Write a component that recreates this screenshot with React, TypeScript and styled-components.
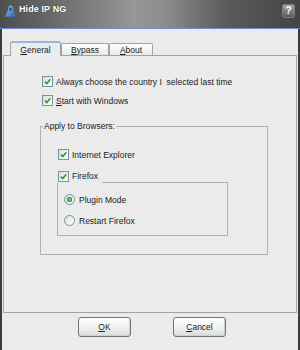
import React from 'react';
import styled, { createGlobalStyle } from 'styled-components';

const GlobalStyle = createGlobalStyle`
	html, body {
		margin: 0;
		padding: 0;
		background: #3c3c3c;
	}
	body {
		font-family: 'Liberation Sans', Arial, sans-serif;
		font-size: 8.5px;
		color: #1b1b1b;
	}
`;

const CheckBox = ({ checked }: { checked?: boolean }) => (
	<Box>
		{checked && (
			<svg width='7' height='7' viewBox='0 0 7 7'>
				<path d='M0.8 3.6 L2.8 5.6 L6.3 1.2' fill='none' stroke='#22a322' strokeWidth='1.6' />
			</svg>
		)}
	</Box>
);

const Radio = ({ checked }: { checked?: boolean }) => <RadioDot checked={checked} />;

const AppIcon = () => (
	<svg width='13' height='12' viewBox='0 0 13 12'>
		<defs>
			<linearGradient id='hood' x1='0' y1='0' x2='1' y2='1'>
				<stop offset='0' stopColor='#8cc2ee' />
				<stop offset='1' stopColor='#2a63a8' />
			</linearGradient>
		</defs>
		<path d='M6.5 0.3 C4.6 0.3 4 2.6 4.2 4.6 L1 11.8 H12.2 L9.2 5.2 C9.6 2.8 8.6 0.3 6.5 0.3 Z' fill='url(#hood)' />
		<path d='M5.6 3.2 C5.6 2.4 7.2 2.4 7.4 3.4 L7.2 6 L5.8 6 Z' fill='#1d3f6e' />
	</svg>
);

const App = () => {
	return (
		<>
			<GlobalStyle />
			<Window>
				<TitleBar>
					<AppIcon />
					<Title>Hide IP NG</Title>
					<HelpButton>?</HelpButton>
				</TitleBar>
				<Body>
					<Tabs>
						<Tab active width={51}>
							<u>G</u>eneral
						</Tab>
						<Tab width={48}>
							<u>B</u>ypass
						</Tab>
						<Tab width={44}>
							<u>A</u>bout
						</Tab>
					</Tabs>
					<Panel>
						<Row>
							<CheckBox checked />
							Always choose the country I&nbsp; selected last time
						</Row>
						<Row spacing={6}>
							<CheckBox checked />
							<span>
								<u>S</u>tart with Windows
							</span>
						</Row>
						<Group>
							<Legend>Apply to Browsers:</Legend>
							<GroupBody>
								<Row>
									<CheckBox checked />
									Internet Explorer
								</Row>
								<SubGroup>
									<SubHeader>
										<CheckBox checked />
										<HeaderLabel>Firefox</HeaderLabel>
										<Rule />
									</SubHeader>
									<SubFrame>
										<Row>
											<Radio checked />
											Plugin Mode
										</Row>
										<Row spacing={8}>
											<Radio />
											Restart Firefox
										</Row>
									</SubFrame>
								</SubGroup>
							</GroupBody>
						</Group>
					</Panel>
					<Buttons>
						<Button>
							<u>O</u>K
						</Button>
						<Button>
							<u>C</u>ancel
						</Button>
					</Buttons>
				</Body>
			</Window>
		</>
	);
};

export default App;

const Window = styled.div`
	width: 300px;
	height: 350px;
	display: flex;
	flex-direction: column;
	background: #3c3c3c;
	overflow: hidden;
`;

const TitleBar = styled.div`
	height: 29px;
	flex-shrink: 0;
	box-sizing: border-box;
	display: flex;
	align-items: flex-start;
	padding: 5px 5px 0 4px;
	background: linear-gradient(90deg, #4e4e4e 0%, #6a6a6a 18%, #979797 45%, #8c8c8c 55%, #5a5a5a 76%, #434343 100%);
	border-bottom: 1px solid #7189c8;
`;

const Title = styled.span`
	margin-left: 2px;
	margin-top: -1px;
	color: #ffffff;
	font-weight: bold;
	font-size: 9px;
	letter-spacing: 0.1px;
	text-shadow: 0 0 1px rgba(0, 0, 0, 0.5);
`;

const HelpButton = styled.div`
	margin-left: auto;
	margin-top: -1px;
	width: 13px;
	height: 14px;
	box-sizing: border-box;
	border: 1px solid #7a7a7a;
	border-radius: 2px;
	background: linear-gradient(#a0a0a0, #5c5c5c);
	color: #ffffff;
	font-weight: bold;
	font-size: 10px;
	line-height: 12px;
	text-align: center;
`;

const Body = styled.div`
	flex: 1;
	margin: 0 2px;
	background: #ebebeb;
	display: flex;
	flex-direction: column;
`;

const Tabs = styled.div`
	margin-top: 12px;
	height: 14px;
	padding-left: 8px;
	display: flex;
	align-items: flex-end;
	position: relative;
	z-index: 1;
`;

const Tab = styled.div<{ active?: boolean; width: number }>`
	width: ${(p) => p.width}px;
	height: ${(p) => (p.active ? 15 : 12)}px;
	margin-bottom: ${(p) => (p.active ? -1 : 0)}px;
	box-sizing: border-box;
	display: flex;
	align-items: center;
	justify-content: center;
	border: 1px solid #a3a3a3;
	border-bottom: none;
	border-top: ${(p) => (p.active ? '2px solid #98b6e2' : '1px solid #a3a3a3')};
	border-radius: 2px 2px 0 0;
	background: ${(p) => (p.active ? '#ececec' : 'linear-gradient(#ffffff, #e9e9e9)')};
	padding-top: ${(p) => (p.active ? 0 : 1)}px;
`;

const Panel = styled.div`
	height: 258px;
	margin: 0 1px;
	box-sizing: border-box;
	border: 1px solid #a3a3a3;
	padding: 19px 0 0 38px;
	display: flex;
	flex-direction: column;
`;

const Row = styled.div<{ spacing?: number }>`
	height: 13px;
	margin-top: ${(p) => p.spacing || 0}px;
	display: flex;
	align-items: center;
	gap: 3px;
	white-space: nowrap;
`;

const Box = styled.span`
	width: 11px;
	height: 11px;
	box-sizing: border-box;
	flex-shrink: 0;
	border: 1px solid #7491ad;
	background: linear-gradient(135deg, #dedcd4, #ffffff);
	display: inline-flex;
	align-items: center;
	justify-content: center;
`;

const RadioDot = styled.span<{ checked?: boolean }>`
	width: 11px;
	height: 11px;
	box-sizing: border-box;
	flex-shrink: 0;
	margin-right: 1px;
	border: 1px solid #7491ad;
	border-radius: 50%;
	background: ${(p) =>
		p.checked
			? 'radial-gradient(circle, #7fe07f 0, #22a322 2.5px, transparent 3px), linear-gradient(135deg, #dedcd4, #ffffff)'
			: 'linear-gradient(135deg, #dedcd4, #ffffff)'};
`;

const Group = styled.fieldset`
	margin: 14px 0 0 -2px;
	width: 228px;
	box-sizing: border-box;
	border: 1px solid #b0b0b0;
	padding: 0;
	min-inline-size: 0;
`;

const Legend = styled.legend`
	margin-left: 2px;
	padding: 0 1px;
	line-height: 11px;
`;

const GroupBody = styled.div`
	padding: 16px 0 18px 17px;
`;

const SubGroup = styled.div`
	margin: 8px 0 0 -1px;
	width: 171px;
`;

const SubHeader = styled.div`
	height: 14px;
	padding-left: 1px;
	display: flex;
	align-items: center;
	gap: 3px;
`;

const HeaderLabel = styled.span`
	padding-bottom: 1px;
`;

const Rule = styled.div`
	flex: 1;
	align-self: flex-end;
	height: 1px;
	margin-left: 1px;
	background: #b0b0b0;
`;

const SubFrame = styled.div`
	border: 1px solid #b0b0b0;
	border-top: none;
	padding: 10px 0 8px 6px;
`;

const Buttons = styled.div`
	margin-top: 4px;
	padding-left: 4px;
	display: flex;
	justify-content: center;
	gap: 42px;
`;

const Button = styled.div`
	width: 53px;
	height: 20px;
	box-sizing: border-box;
	border: 1px solid #7b7267;
	border-radius: 3px;
	background: linear-gradient(#ffffff, #f0f0f0 55%, #dadada);
	box-shadow: inset -1px -1px 0 #cfcfcf;
	display: flex;
	align-items: center;
	justify-content: center;
`;
